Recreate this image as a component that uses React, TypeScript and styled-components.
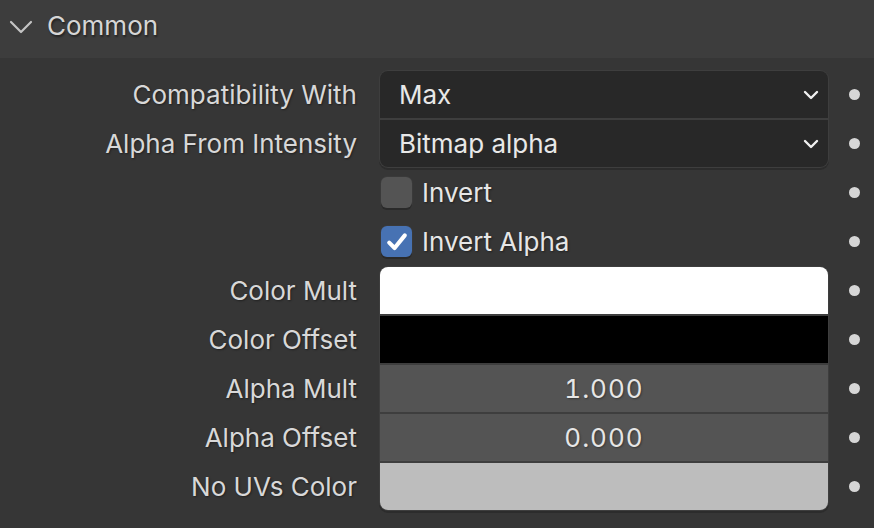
import React from 'react';
import styled, { createGlobalStyle } from 'styled-components';

const GlobalStyle = createGlobalStyle`
  html, body {
    margin: 0;
    padding: 0;
    background: #363636;
  }
  body {
    font-family: Inter, "DejaVu Sans", sans-serif;
    -webkit-font-smoothing: antialiased;
  }
`;

type Pos = 'single' | 'top' | 'middle' | 'bottom';

type RowData =
  | { kind: 'enum'; label: string; value: string; pos: Pos }
  | { kind: 'check'; label: string; checked: boolean }
  | { kind: 'color'; label: string; color: string; pos: Pos }
  | { kind: 'number'; label: string; value: string; pos: Pos };

const rows: RowData[] = [
  { kind: 'enum', label: 'Compatibility With', value: 'Max', pos: 'top' },
  { kind: 'enum', label: 'Alpha From Intensity', value: 'Bitmap alpha', pos: 'bottom' },
  { kind: 'check', label: 'Invert', checked: false },
  { kind: 'check', label: 'Invert Alpha', checked: true },
  { kind: 'color', label: 'Color Mult', color: '#ffffff', pos: 'top' },
  { kind: 'color', label: 'Color Offset', color: '#000000', pos: 'middle' },
  { kind: 'number', label: 'Alpha Mult', value: '1.000', pos: 'middle' },
  { kind: 'number', label: 'Alpha Offset', value: '0.000', pos: 'middle' },
  { kind: 'color', label: 'No UVs Color', color: '#bdbdbd', pos: 'bottom' },
];

const radius = (pos: Pos) => {
  switch (pos) {
    case 'top':
      return '8px 8px 0 0';
    case 'bottom':
      return '0 0 8px 8px';
    case 'middle':
      return '0';
    default:
      return '8px';
  }
};

const App: React.FC = () => {
  return (
    <>
      <GlobalStyle />
      <Panel>
        <Header>
          <Chevron viewBox="0 0 24 14">
            <path d="M2 2 L12 12 L22 2" />
          </Chevron>
          <Title>Common</Title>
        </Header>
        <Body>
          {rows.map(row => (
            <Row key={row.label}>
              <Label>{row.kind === 'check' ? '' : row.label}</Label>
              {row.kind === 'enum' && (
                <Field $pos={row.pos} $bg="#282828">
                  <EnumText>{row.value}</EnumText>
                  <DropArrow viewBox="0 0 16 10">
                    <path d="M2 2 L8 8 L14 2" />
                  </DropArrow>
                </Field>
              )}
              {row.kind === 'check' && (
                <CheckWrap>
                  <Box $checked={row.checked}>
                    {row.checked && (
                      <svg viewBox="0 0 20 20" width="24" height="24">
                        <path
                          d="M3.5 10.5 L8 15 L16.5 4.5"
                          fill="none"
                          stroke="#fff"
                          strokeWidth="3.4"
                          strokeLinecap="round"
                          strokeLinejoin="round"
                        />
                      </svg>
                    )}
                  </Box>
                  <CheckText>{row.label}</CheckText>
                </CheckWrap>
              )}
              {row.kind === 'color' && <Field $pos={row.pos} $bg={row.color} />}
              {row.kind === 'number' && (
                <Field $pos={row.pos} $bg="#545454">
                  <NumText>{row.value}</NumText>
                </Field>
              )}
              <Dot />
            </Row>
          ))}
        </Body>
      </Panel>
    </>
  );
};

export default App;

const Panel = styled.div`
  width: 874px;
  height: 528px;
  background: #363636;
  overflow: hidden;
`;

const Header = styled.div`
  height: 58px;
  background: #3d3d3d;
  display: flex;
  align-items: center;
  padding-left: 9px;
  padding-bottom: 4px;
  gap: 14px;
  box-sizing: border-box;
`;

const Chevron = styled.svg`
  width: 24px;
  height: 14px;

  path {
    fill: none;
    stroke: #c4c4c4;
    stroke-width: 2.2;
    stroke-linecap: round;
    stroke-linejoin: round;
  }
`;

const Title = styled.div`
  font-size: 26px;
  color: #d6d6d6;
  text-shadow: 1px 2px 2px rgba(0, 0, 0, 0.45);
  margin-top: -4px;
`;

const Body = styled.div`
  display: flex;
  flex-direction: column;
  gap: 2px;
  padding-top: 13px;
`;

const Row = styled.div`
  display: grid;
  grid-template-columns: 357px 448px 1fr;
  column-gap: 23px;
  height: 47px;
  align-items: center;
`;

const Label = styled.div`
  text-align: right;
  font-size: 26px;
  color: #d8d8d8;
  text-shadow: 1px 1px 2px rgba(0, 0, 0, 0.4);
  white-space: nowrap;
`;

const Field = styled.div<{ $pos: Pos; $bg: string }>`
  height: 47px;
  box-sizing: border-box;
  background: ${p => p.$bg};
  border-radius: ${p => radius(p.$pos)};
  box-shadow: 0 0 0 1px #3e3e3e
    ${p => (p.$pos === 'bottom' || p.$pos === 'single' ? ', 0 2px 0 1px #2c2c2c' : '')};
  display: flex;
  align-items: center;
`;

const EnumText = styled.div`
  flex: 1;
  padding-left: 19px;
  font-size: 26px;
  color: #e8e8e8;
`;

const DropArrow = styled.svg`
  width: 16px;
  height: 10px;
  margin-right: 9px;

  path {
    fill: none;
    stroke: #f0f0f0;
    stroke-width: 2.4;
    stroke-linecap: round;
    stroke-linejoin: round;
  }
`;

const NumText = styled.div`
  flex: 1;
  text-align: center;
  font-size: 26px;
  letter-spacing: 1px;
  font-variant-numeric: tabular-nums;
  color: #e6e6e6;
  text-shadow: 1px 1px 2px rgba(0, 0, 0, 0.35);
`;

const CheckWrap = styled.div`
  display: flex;
  align-items: center;
  gap: 10px;
  padding-left: 1px;
`;

const Box = styled.div<{ $checked: boolean }>`
  width: 31px;
  height: 31px;
  border-radius: 6px;
  background: ${p => (p.$checked ? '#4772b3' : '#545454')};
  box-shadow: 0 2px 0 0 #2a2a2a, 0 0 0 1px #3a3a3a;
  display: flex;
  align-items: center;
  justify-content: center;
`;

const CheckText = styled.div`
  font-size: 26px;
  color: #e6e6e6;
  text-shadow: 1px 1px 2px rgba(0, 0, 0, 0.4);
`;

const Dot = styled.div`
  width: 11px;
  height: 11px;
  border-radius: 50%;
  background: #d6d6d6;
  margin-left: -2px;
`;
